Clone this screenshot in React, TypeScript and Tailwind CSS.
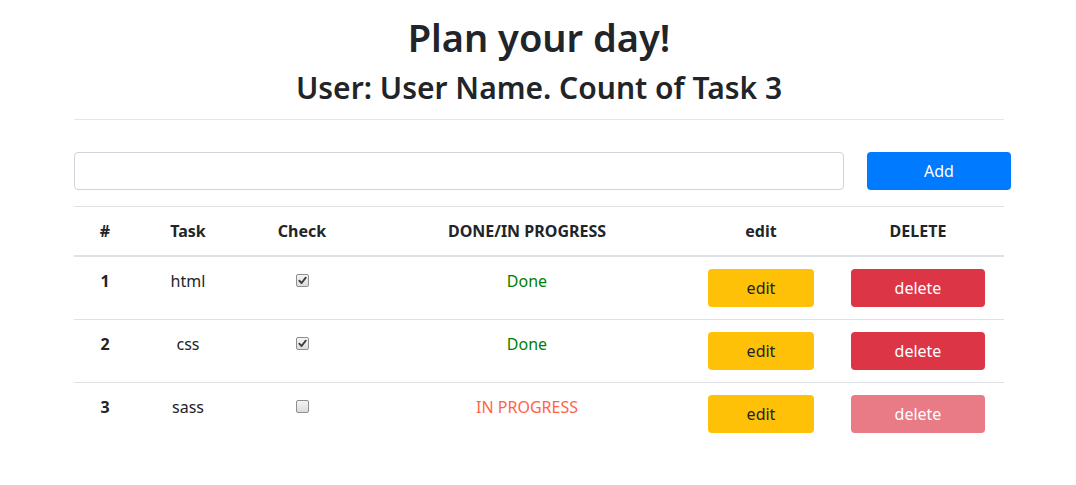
import React from 'react';

type Task = { id: number; name: string; done: boolean };

const tasks: Task[] = [
  { id: 1, name: 'html', done: true },
  { id: 2, name: 'css', done: true },
  { id: 3, name: 'sass', done: false },
];

// Old-style grey checkbox, drawn so it looks the same in every browser
function Check({ checked }: { checked: boolean }) {
  return (
    <span className="relative -top-[2px] inline-flex h-[13px] w-[13px] items-center justify-center rounded-[2px] border border-[#8e8f8f] bg-gradient-to-b from-[#f4f4f4] to-[#dcdcdc] align-middle">
      {checked && (
        <svg viewBox="0 0 10 10" className="h-[9px] w-[9px]">
          <path d="M1.5 5.2 L4 7.8 L8.6 1.8" fill="none" stroke="#3b3b3b" strokeWidth={2} strokeLinecap="round" strokeLinejoin="round" />
        </svg>
      )}
    </span>
  );
}

export default function App() {
  return (
    <div className="min-h-[485px] bg-white text-[16px] leading-[1.5] text-[#212529]" style={{ fontFamily: '"Noto Sans", "Open Sans", sans-serif' }}>
      <div className="mx-auto max-w-[960px] pl-[16px] pr-[14px] pt-[13px]">
        <h1 className="mb-[8px] text-center text-[38px] font-semibold leading-[48px]">Plan your day!</h1>
        <h2 className="text-center text-[30px] font-semibold leading-[38px]">User: User Name. Count of Task 3</h2>
        <hr className="mt-[12px] mb-[32px] border-t border-[#e6e6e6]" />

        <div className="mb-[16px] flex gap-[23px]">
          <input className="h-[38px] w-[770px] shrink-0 rounded-[4px] border border-[#ced4da] px-3 outline-none" />
          <button className="h-[38px] w-[144px] shrink-0 rounded-[4px] bg-[#007bff] text-white">Add</button>
        </div>

        <table className="w-full border-collapse text-center">
          <thead>
            <tr className="border-t border-b-2 border-[#dee2e6]">
              <th className="w-[62px] p-[12px] font-bold">#</th>
              <th className="w-[104px] p-[12px] font-bold">Task</th>
              <th className="w-[124px] p-[12px] font-bold">Check</th>
              <th className="w-[326px] p-[12px] font-bold">DONE/IN PROGRESS</th>
              <th className="w-[142px] p-[12px] font-bold">edit</th>
              <th className="p-[12px] font-bold">DELETE</th>
            </tr>
          </thead>
          <tbody>
            {tasks.map((t) => (
              <tr key={t.id} className="border-t border-[#dee2e6] align-top first:border-t-0">
                <td className="p-[12px] font-bold">{t.id}</td>
                <td className="p-[12px]">{t.name}</td>
                <td className="p-[12px]"><Check checked={t.done} /></td>
                <td className={`p-[12px] ${t.done ? 'text-[#008000]' : 'text-[#ff6347]'}`}>{t.done ? 'Done' : 'IN PROGRESS'}</td>
                <td className="p-[12px]">
                  <button className="h-[38px] w-[106px] rounded-[4px] bg-[#ffc107] text-[#212529]">edit</button>
                </td>
                <td className="p-[12px]">
                  <button className={`h-[38px] w-[134px] rounded-[4px] bg-[#dc3545] text-white ${t.done ? '' : 'opacity-65'}`}>delete</button>
                </td>
              </tr>
            ))}
          </tbody>
        </table>
      </div>
    </div>
  );
}
